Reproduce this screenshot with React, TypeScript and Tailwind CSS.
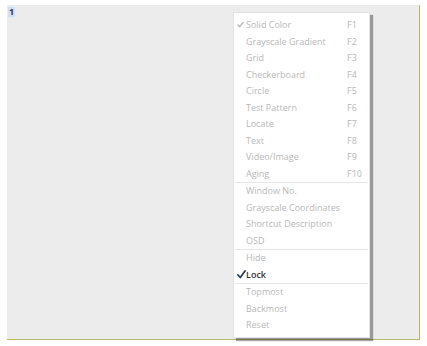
import React from 'react';

type Item = { label: string; key?: string; checked?: boolean; active?: boolean } | 'sep';

const ITEMS: Item[] = [
  { label: 'Solid Color', key: 'F1', checked: true },
  { label: 'Grayscale Gradient', key: 'F2' },
  { label: 'Grid', key: 'F3' },
  { label: 'Checkerboard', key: 'F4' },
  { label: 'Circle', key: 'F5' },
  { label: 'Test Pattern', key: 'F6' },
  { label: 'Locate', key: 'F7' },
  { label: 'Text', key: 'F8' },
  { label: 'Video/Image', key: 'F9' },
  { label: 'Aging', key: 'F10' },
  'sep',
  { label: 'Window No.' },
  { label: 'Grayscale Coordinates' },
  { label: 'Shortcut Description' },
  { label: 'OSD' },
  'sep',
  { label: 'Hide' },
  { label: 'Lock', checked: true, active: true },
  'sep',
  { label: 'Topmost' },
  { label: 'Backmost' },
  { label: 'Reset' },
];

function Check({ dark }: { dark?: boolean }) {
  return dark ? (
    <svg width="9" height="9" viewBox="0 0 9 9" className="block">
      <path d="M1 5 L3.3 7.5 L8 1" fill="none" stroke="#2c3d50" strokeWidth={1.8} strokeLinecap="round" strokeLinejoin="round" />
    </svg>
  ) : (
    <svg width="7" height="7" viewBox="0 0 7 7" className="block">
      <path d="M1 4 L2.7 5.7 L6 1.5" fill="none" stroke="#b5b5b5" strokeWidth={1.3} strokeLinecap="round" strokeLinejoin="round" />
    </svg>
  );
}

export default function App() {
  return (
    <div className="w-[427px] h-[346px] bg-white font-['Open_Sans',sans-serif] pt-[5px] pl-[7px]">
      <div className="relative w-[413px] h-[335px] bg-[#ececec] border-b border-r border-[#b9b86a]">
        <span className="absolute left-[1px] top-[2px] text-[9px] leading-[10px] font-bold text-[#1f3a64] bg-[#cfe0f5] px-[1px]">1</span>

        {/* context menu */}
        <div className="absolute left-[226px] top-[7px] w-[137px] bg-white border border-[#e4e4e4] shadow-[3px_3px_1px_rgba(0,0,0,0.35)] py-[3.5px] text-[9px]">
          {ITEMS.map((it, i) =>
            it === 'sep' ? (
              <div key={i} className="h-px bg-[#e6e6e6] mx-[1px]" />
            ) : (
              <div key={i} className="h-[16.5px] flex items-center">
                <div className="w-[12px] pl-[3px] flex items-center">
                  {it.checked && <Check dark={it.active} />}
                </div>
                <span className={`flex-1 whitespace-nowrap ${it.active ? 'text-[#333333] font-semibold' : 'text-[#b8b8b8]'}`}>
                  {it.label}
                </span>
                <span className="w-[22px] text-[#b8b8b8]">{it.key}</span>
              </div>
            )
          )}
        </div>
      </div>
    </div>
  );
}
